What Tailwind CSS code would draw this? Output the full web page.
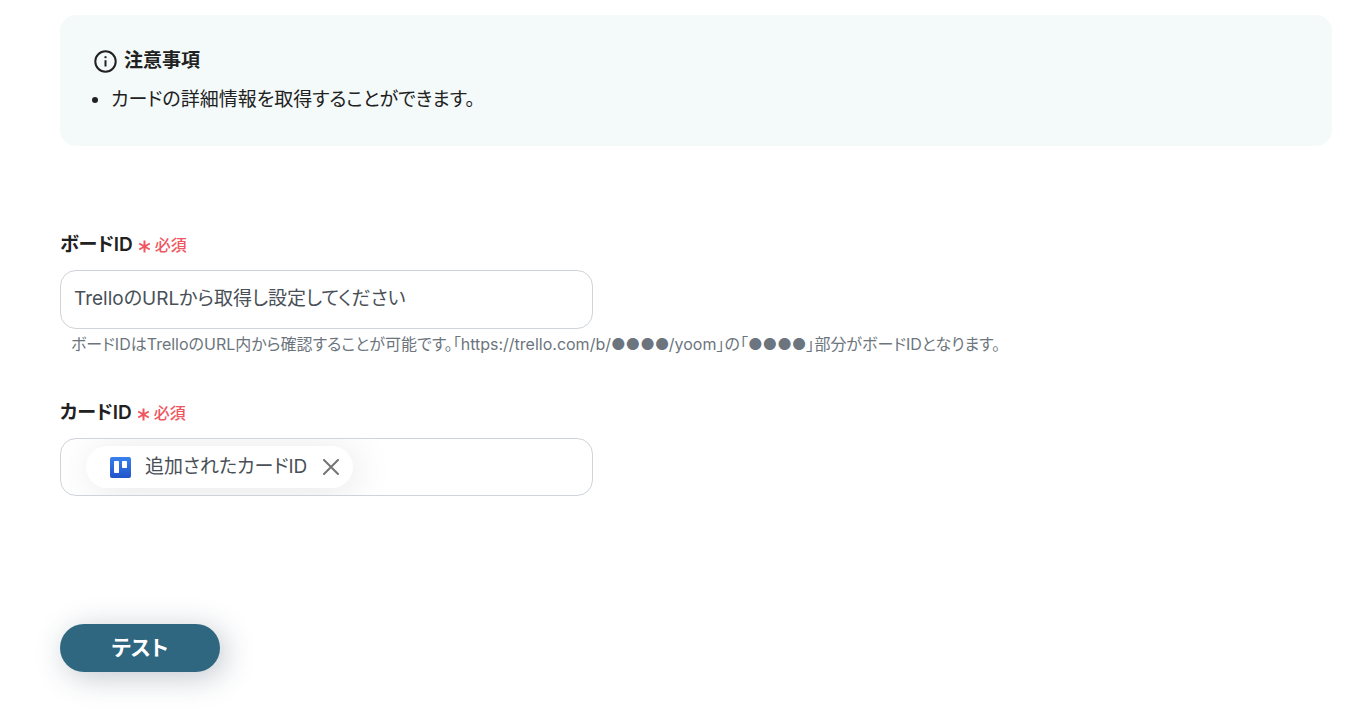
<!DOCTYPE html>
<html lang="ja">
<head>
<meta charset="utf-8">
<meta name="viewport" content="width=device-width, initial-scale=1">
<title>カードの詳細情報を取得</title>
<script src="https://cdn.jsdelivr.net/npm/@tailwindcss/browser@4"></script>
</head>
<body class="bg-white pl-[60px] pr-10 pt-[15px] pb-10 font-[Inter,'Noto_Sans_CJK_JP',sans-serif] text-[#212121] [font-feature-settings:'palt']">
<main>
  <section class="rounded-2xl bg-[#f4fafa] px-[34px] pt-8 pb-8" aria-labelledby="notice">
    <div class="flex items-center gap-[7px]">
      <svg class="size-[23px]" viewBox="0 0 23 23" fill="none" stroke="currentColor" stroke-width="2" aria-hidden="true">
        <circle cx="11.5" cy="11.5" r="10.2"/>
        <path d="M11.5 10.2v6.3"/>
        <path d="M11.5 6.2v2"/>
      </svg>
      <h2 id="notice" class="text-[19px] leading-7 font-semibold">注意事項</h2>
    </div>
    <ul class="mt-[11px] list-disc pl-[17px] text-[19px] leading-7">
      <li>カードの詳細情報を取得することができます。</li>
    </ul>
  </section>

  <form class="mt-[85px]">
    <div>
      <div class="flex items-center gap-[5px]">
        <label for="board" class="text-[19px] leading-7 font-semibold">ボードID</label>
        <span class="flex items-center gap-1 text-base leading-7 font-medium text-[#f0565f]">
          <svg class="mt-[3px] size-[13px]" viewBox="0 0 13 13" stroke="currentColor" stroke-width="2" aria-hidden="true">
            <path d="M6.5 0.5v12M1.2 3.5l10.6 6M11.8 3.5L1.2 9.5"/>
          </svg>必須</span>
      </div>
      <input id="board" type="text" required placeholder="TrelloのURLから取得し設定してください" class="mt-[11px] block h-[59px] w-full max-w-[533px] rounded-2xl border border-[#ced4da] px-[13px] pb-[3px] text-[19px] text-[#495057] outline-none placeholder:text-[#495057]">
      <p class="mt-[3px] pl-[11px] text-base leading-6 text-[#6c757d]">ボードIDはTrelloのURL内から確認することが可能です。「https://trello.com/b/●●●●/yoom」の「●●●●」部分がボードIDとなります。</p>
    </div>

    <div class="mt-[43px]">
      <div class="flex items-center gap-[5px]">
        <label for="card" class="text-[19px] leading-7 font-semibold">カードID</label>
        <span class="flex items-center gap-1 text-base leading-7 font-medium text-[#f0565f]">
          <svg class="mt-[3px] size-[13px]" viewBox="0 0 13 13" stroke="currentColor" stroke-width="2" aria-hidden="true">
            <path d="M6.5 0.5v12M1.2 3.5l10.6 6M11.8 3.5L1.2 9.5"/>
          </svg>必須</span>
      </div>
      <div class="mt-[11px] flex h-[58px] w-full max-w-[533px] items-center overflow-hidden rounded-2xl border border-[#ced4da] pr-3.5 pl-[25px]">
        <div class="flex h-[42px] shrink-0 items-center rounded-full bg-white pr-3 pl-6 shadow-[4px_4px_40px_rgba(0,0,0,0.1)]">
          <svg class="size-[21px]" viewBox="0 0 21 21" aria-hidden="true">
            <defs><linearGradient id="blue" x1="0" y1="0" x2="0" y2="1"><stop offset="0" stop-color="#3880ee"/><stop offset="1" stop-color="#2254c8"/></linearGradient></defs>
            <rect width="21" height="21" rx="2" fill="url(#blue)"/>
            <rect x="4" y="4" width="5" height="12" rx="0.8" fill="#fff"/>
            <rect x="12" y="4" width="5" height="7" rx="0.8" fill="#fff"/>
          </svg>
          <span class="ml-3.5 pb-px text-[19px] leading-7 text-[#495057]">追加されたカードID</span>
          <button type="button" aria-label="削除" class="ml-3.5 p-0.5 text-[#757575]">
            <svg class="size-4" viewBox="0 0 16 16" fill="none" stroke="currentColor" stroke-width="2" stroke-linecap="round" aria-hidden="true"><path d="M1 1l14 14M15 1L1 15"/></svg>
          </button>
        </div>
        <input id="card" type="text" class="min-w-0 flex-1 bg-transparent text-[19px] outline-none">
      </div>
    </div>

    <button type="submit" class="mt-32 block h-12 w-40 rounded-full bg-[#2f6780] text-[21px] font-semibold text-white shadow-[5px_5px_30px_rgba(33,53,79,0.28)]">テスト</button>
  </form>
</main>
</body>
</html>
